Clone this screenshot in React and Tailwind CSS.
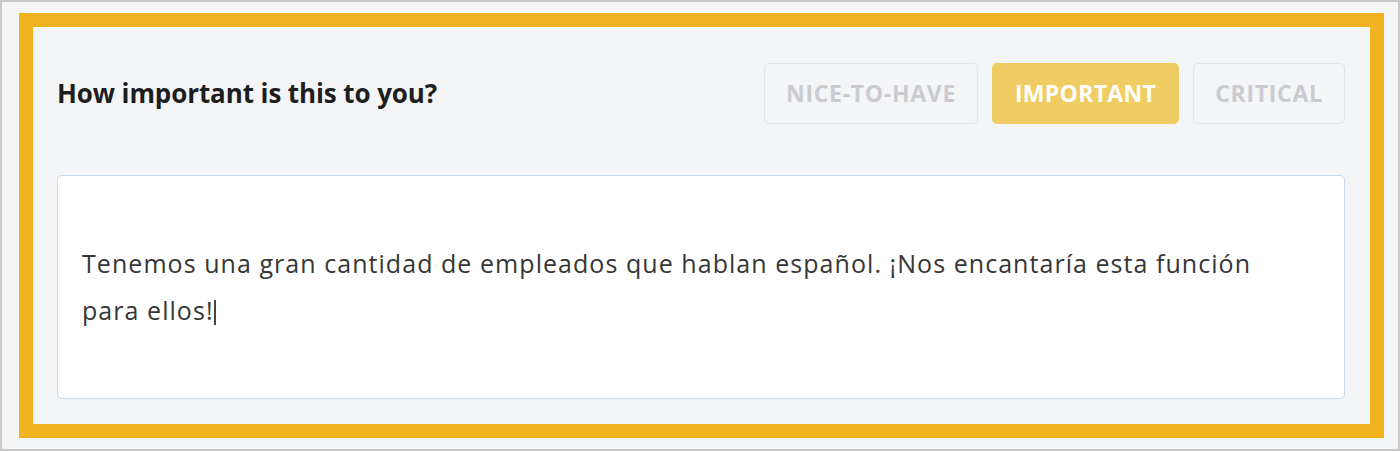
export default function App() {
  return (
    <div className="w-[1400px] h-[451px] bg-[#f4f5f7] border-2 border-[#c9c9c9] pt-[11px] pl-[17px] pr-[14px] pb-[11px] font-['Open_Sans',sans-serif]">
      <div className="h-full border-[14px] border-[#f2b21e] bg-[#f4f5f7] pt-[36px] pl-6 pr-[25px] pb-[25px] flex flex-col">
        <div className="flex items-center justify-between h-[61px]">
          <div className="text-[26px] font-bold text-[#1e1e1e] tracking-[-0.1px]">How important is this to you?</div>
          <div className="flex gap-[14px] h-full">
            <button className="w-[214px] h-full rounded-[5px] border border-[#e3e5e8] text-[23px] font-bold text-[#c9cbcf] uppercase tracking-[0.7px]">NICE-TO-HAVE</button>
            <button className="w-[187px] h-full rounded-[5px] bg-[#f0cd62] text-[23px] font-bold text-white uppercase tracking-[0.3px]">IMPORTANT</button>
            <button className="w-[152px] h-full rounded-[5px] border border-[#e3e5e8] text-[23px] font-bold text-[#c9cbcf] uppercase tracking-[0.7px]">CRITICAL</button>
          </div>
        </div>
        <div className="mt-[51px] flex-1 bg-white border border-[#c6d9f3] rounded-[5px] pl-6 pr-6 flex items-center">
          <p className="text-[25px] leading-[47px] text-[#363636] tracking-[1.05px]">
            Tenemos una gran cantidad de empleados que hablan español. ¡Nos encantaría esta función
            <br />
            para ellos!<span className="inline-block w-[2px] h-[25px] bg-[#444] align-middle -mt-[2px]"></span>
          </p>
        </div>
      </div>
    </div>
  );
}
